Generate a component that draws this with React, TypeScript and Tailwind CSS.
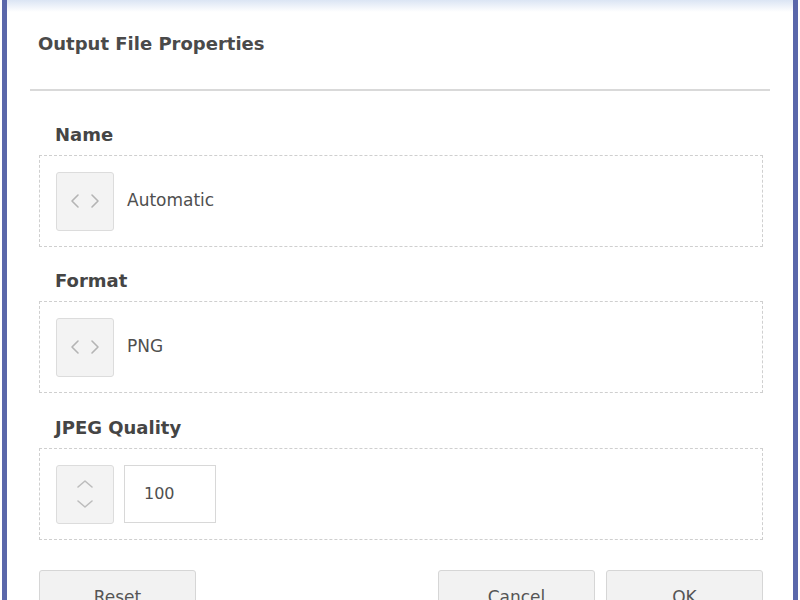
import type { ReactNode } from "react";

const FONT = { fontFamily: '"DejaVu Sans", Verdana, sans-serif' };

function CodeIcon() {
  return (
    <svg width="30" height="16" viewBox="0 0 30 16" fill="none" stroke="#b4b4b4" strokeWidth="1.6" strokeLinecap="round" strokeLinejoin="round">
      <path d="M8 2 L2 8 L8 14" />
      <path d="M22 2 L28 8 L22 14" />
    </svg>
  );
}

function SpinIcon() {
  return (
    <svg width="20" height="32" viewBox="0 0 20 32" fill="none" stroke="#bcbcbc" strokeWidth="1.6" strokeLinecap="round" strokeLinejoin="round">
      <path d="M3 9 L10 3 L17 9" />
      <path d="M3 23 L10 29 L17 23" />
    </svg>
  );
}

function IconButton({ children }: { children: ReactNode }) {
  return (
    <div className="flex h-[59px] w-[58px] shrink-0 items-center justify-center rounded-[3px] border border-[#dcdcdc] bg-[#f3f3f3]">
      {children}
    </div>
  );
}

function Section({ label, children, gap }: { label: string; children: ReactNode; gap: string }) {
  return (
    <div className={gap}>
      <div className="ml-[48px] h-[24px] text-[18px] font-bold leading-[24px] text-[#454545]">{label}</div>
      <div className="mt-[8px] ml-[32px] mr-[30px] flex h-[92px] items-center gap-[10px] border border-dashed border-[#cfcfcf] pl-[16px]">
        {children}
      </div>
    </div>
  );
}

export default function App() {
  return (
    <div className="h-[600px] w-[800px] overflow-hidden bg-white px-[2px]" style={FONT}>
      <div className="flex h-full flex-col border-x-[5px] border-[#5a67aa] bg-white">
        <div className="h-[12px] shrink-0 bg-gradient-to-b from-[#dbe5f4] to-white" />
        <div className="mt-[20px] shrink-0 pl-[31px] text-[18px] font-bold leading-[24px] text-[#4a4a4a]">Output File Properties</div>
        <div className="mx-[23px] mt-[33px] h-[2px] shrink-0 bg-[#d9d9d9]" />

        <Section label="Name" gap="mt-[32px]">
          <IconButton>
            <CodeIcon />
          </IconButton>
          <span className="ml-[3px] text-[17px] text-[#4f4f4f]">Automatic</span>
        </Section>

        <Section label="Format" gap="mt-[22px]">
          <IconButton>
            <CodeIcon />
          </IconButton>
          <span className="ml-[3px] text-[17px] text-[#4f4f4f]">PNG</span>
        </Section>

        <Section label="JPEG Quality" gap="mt-[23px]">
          <IconButton>
            <SpinIcon />
          </IconButton>
          <div className="flex h-[58px] w-[92px] items-center border border-[#d8d8d8] bg-white pl-[19px] text-[16px] text-[#4f4f4f]">
            100
          </div>
        </Section>

        <div className="mt-[30px] ml-[32px] mr-[30px] flex shrink-0 gap-[11px]">
          <button className="h-[56px] w-[157px] rounded-[3px] border border-[#d6d6d6] bg-[#f2f2f2] text-[17px] text-[#555]">Reset</button>
          <div className="flex-1" />
          <button className="h-[56px] w-[157px] rounded-[3px] border border-[#d6d6d6] bg-[#f2f2f2] text-[17px] text-[#555]">Cancel</button>
          <button className="h-[56px] w-[157px] rounded-[3px] border border-[#d6d6d6] bg-[#f2f2f2] text-[17px] text-[#555]">OK</button>
        </div>
      </div>
    </div>
  );
}
